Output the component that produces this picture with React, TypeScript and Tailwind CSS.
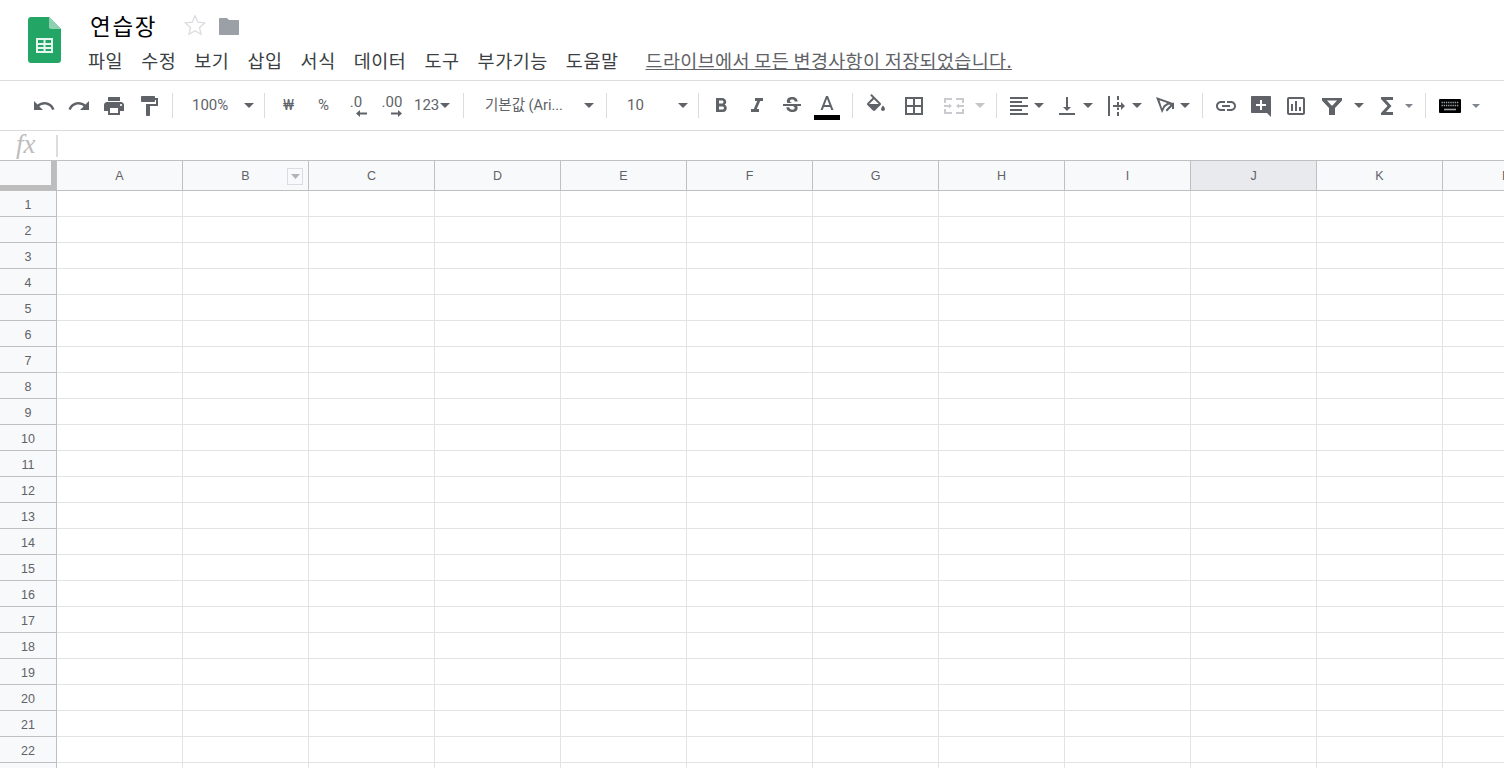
import React from "react";

const cjk = "font-['Noto_Sans_CJK_KR',sans-serif]";

function Ic({ d, className = "fill-[#5f6368]" }: { d: string; className?: string }) {
  return (
    <svg width="24" height="24" viewBox="0 0 24 24" className={`shrink-0 ${className}`}>
      <path d={d} />
    </svg>
  );
}

function Caret({ small, light }: { small?: boolean; light?: boolean }) {
  return (
    <svg width={small ? 8 : 10} height={small ? 4 : 5} viewBox="0 0 10 5" className={light ? "shrink-0 fill-[#c4c6c9]" : small ? "shrink-0 fill-[#80868b]" : "shrink-0 fill-[#5f6368]"}>
      <path d="M0 0h10L5 5z" />
    </svg>
  );
}

function Sep({ className = "" }: { className?: string }) {
  return <div className={`w-px h-[25px] bg-[#dadce0] shrink-0 ${className}`} />;
}

const box = "flex items-center justify-center shrink-0 h-full";
const ib = "flex items-center justify-center shrink-0 h-full pr-[1px]";
const row = "flex items-center shrink-0 h-full";

const P = {
  undo: "M12.5 8c-2.65 0-5.05.99-6.9 2.6L2 7v9h9l-3.62-3.62c1.39-1.16 3.16-1.88 5.12-1.88 3.54 0 6.55 2.31 7.6 5.5l2.37-.78C21.08 11.03 17.15 8 12.5 8z",
  redo: "M18.4 10.6C16.55 8.99 14.15 8 11.5 8c-4.65 0-8.58 3.03-9.96 7.22L3.9 16c1.05-3.19 4.05-5.5 7.6-5.5 1.95 0 3.73.72 5.12 1.88L13 16h9V7l-3.6 3.6z",
  print: "M19 8H5c-1.66 0-3 1.34-3 3v6h4v4h12v-4h4v-6c0-1.66-1.34-3-3-3zm-3 11H8v-5h8v5zm3-7c-.55 0-1-.45-1-1s.45-1 1-1 1 .45 1 1-.45 1-1 1zm-1-9H6v4h12V3z",
  paint: "M18 4V3c0-.55-.45-1-1-1H5c-.55 0-1 .45-1 1v4c0 .55.45 1 1 1h12c.55 0 1-.45 1-1V6h1v4H9v11c0 .55.45 1 1 1h2c.55 0 1-.45 1-1v-9h8V4h-3z",
  bold: "M15.6 10.79c.97-.67 1.65-1.77 1.65-2.79 0-2.26-1.75-4-4-4H7v14h7.04c2.09 0 3.71-1.7 3.71-3.79 0-1.52-.86-2.82-2.15-3.42zM10 6.5h3c.83 0 1.5.67 1.5 1.5s-.67 1.5-1.5 1.5h-3v-3zm3.5 9H10v-3h3.5c.83 0 1.5.67 1.5 1.5s-.67 1.5-1.5 1.5z",
  italic: "M10 4v3h2.21l-3.42 8H6v3h8v-3h-2.21l3.42-8H18V4z",
  strike: "M7.24 8.75c-.26-.48-.39-1.03-.39-1.67 0-.61.13-1.16.4-1.67.26-.5.63-.93 1.11-1.29.48-.35 1.05-.63 1.7-.83.66-.19 1.39-.29 2.18-.29.81 0 1.54.11 2.21.34.66.22 1.23.54 1.69.94.47.4.83.88 1.08 1.43.25.55.38 1.15.38 1.81h-3.01c0-.31-.05-.59-.15-.85-.09-.27-.24-.49-.44-.68-.2-.19-.45-.33-.75-.44-.3-.1-.66-.16-1.06-.16-.39 0-.74.04-1.03.13-.29.09-.53.21-.72.36-.19.16-.34.34-.44.55-.1.21-.15.43-.15.66 0 .48.25.88.74 1.21.38.25.77.48 1.41.7H7.39c-.05-.08-.11-.17-.15-.25zM21 12v-2H3v2h9.62c.18.07.4.14.55.2.37.17.66.34.87.51.21.17.35.36.43.57.07.2.11.43.11.69 0 .23-.05.45-.14.66-.09.2-.23.38-.42.53-.19.15-.42.26-.71.35-.29.08-.63.13-1.01.13-.43 0-.83-.04-1.18-.13s-.66-.23-.91-.42c-.25-.19-.45-.44-.59-.75-.14-.31-.25-.76-.25-1.21H6.4c0 .55.08 1.13.24 1.58.16.45.37.85.65 1.21.28.35.6.66.98.92.37.26.78.48 1.22.65.44.17.9.3 1.38.39.48.08.96.13 1.44.13.8 0 1.53-.09 2.18-.28s1.21-.45 1.67-.79c.46-.34.82-.77 1.07-1.27s.38-1.07.38-1.71c0-.6-.1-1.14-.31-1.61-.05-.11-.11-.23-.17-.33H21z",
  color: "M11 2L5.5 16h2.25l1.12-3h6.25l1.12 3h2.25L13 2h-2zm-1.38 9L12 4.67 14.38 11H9.62z",
  fill: "M16.56 8.94L7.62 0 6.21 1.41l2.38 2.38-5.15 5.15c-.59.59-.59 1.54 0 2.12l5.5 5.5c.29.29.68.44 1.06.44s.77-.15 1.06-.44l5.5-5.5c.59-.58.59-1.53 0-2.12zM5.21 10L10 5.21 14.79 10H5.21zM19 11.5s-2 2.17-2 3.5c0 1.1.9 2 2 2s2-.9 2-2c0-1.33-2-3.5-2-3.5z",
  borders: "M3 3v18h18V3H3zm8 16H5v-6h6v6zm0-8H5V5h6v6zm8 8h-6v-6h6v6zm0-8h-6V5h6v6z",
  merge: "M2 4h8v2H4v3H2V4zm12 0h8v5h-2V6h-6V4zM2 15h2v3h6v2H2v-5zm18 0h2v5h-8v-2h6v-3zM2 11h5V9.5L10 12l-3 2.5V13H2v-2zm20 0v2h-5v1.5L14 12l3-2.5V11h5z",
  align: "M15 15H3v2h12v-2zm0-8H3v2h12V7zM3 13h18v-2H3v2zm0 8h18v-2H3v2zM3 3v2h18V3H3z",
  valign: "M16 13h-3V3h-2v10H8l4 4 4-4zM4 19v2h16v-2H4z",
  wrap: "M3 2h2v20H3V2zm9 0h2v4h-2V2zm0 16h2v4h-2v-4zm0-10h2v3h-2V8zm-4 3h8V8l4 4-4 4v-3H8v-2zm4 2.500h2V16h-2v-2.500z",
  rotate: "M3 3l6 16 3-6 6.500-4.500L3 3zm3.500 3.300l7.700 2.600-3.600 2.600-1.500 3-2.600-8.200zM12.600 16l1.400 1.400 5-5V15h2V8.800h-6.200v2h2.800l-5 5.200z",
  link: "M3.9 12c0-1.71 1.39-3.1 3.1-3.1h4V7H7c-2.76 0-5 2.24-5 5s2.24 5 5 5h4v-1.9H7c-1.71 0-3.1-1.39-3.1-3.1zM8 13h8v-2H8v2zm9-6h-4v1.9h4c1.71 0 3.1 1.39 3.1 3.1s-1.39 3.1-3.1 3.1h-4V17h4c2.76 0 5-2.24 5-5s-2.24-5-5-5z",
  comment: "M3 2h18c.55 0 1 .45 1 1v20l-4-4H3c-.55 0-1-.45-1-1V3c0-.55.45-1 1-1zm10 4h-2v4H7v2h4v4h2v-4h4v-2h-4V6z",
  chart: "M19 3H5c-1.1 0-2 .9-2 2v14c0 1.1.9 2 2 2h14c1.1 0 2-.9 2-2V5c0-1.1-.9-2-2-2zm0 16H5V5h14v14zM7 10h2v7H7v-7zm4-3h2v10h-2V7zm4 6h2v4h-2v-4z",
  filter: "M2 4h20v2.500L15 14v7H9v-7L2 6.500V4zm5 2.500l4.500 5h1l4.500-5H7z",
  sigma: "M18 3H6v2l6.500 7L6 19v2h12v-3h-7l5.500-6L11 6h7V3z",
};

function Toolbar() {
  return (
    <div className="flex items-center h-[49px] border-b border-[#dadce0] box-content pl-[27px] text-[15px] text-[#5f6368] font-['Roboto',sans-serif] overflow-hidden">
      <div className={`${ib} w-[35px]`}><Ic d={P.undo} /></div>
      <div className={`${ib} w-[35px]`}><Ic d={P.redo} /></div>
      <div className={`${ib} w-[35px]`}><Ic d={P.print} /></div>
      <div className={`${ib} w-[35px]`}><Ic d={P.paint} /></div>
      <Sep className="ml-[5px]" />
      <div className={`${row} w-[91px] justify-between pl-[19px] pr-[10px]`}><span>100%</span><Caret /></div>
      <Sep />
      <div className={`${box} w-[35px] ml-[6px] text-[15px]`}>₩</div>
      <div className={`${box} w-[35px] text-[15px]`}>%</div>
      <div className={`${box} w-[34px] flex-col`}>
        <span className="leading-[15px] mt-[1px] -ml-[4px]">.0</span>
        <svg width="11" height="7" viewBox="0 0 11 7" className="fill-[#5f6368] ml-[6px]"><path d="M4 0v2.500h7v2H4V7L0 3.500z" /></svg>
      </div>
      <div className={`${box} w-[34px] flex-col`}>
        <span className="leading-[15px] mt-[1px]">.00</span>
        <svg width="11" height="7" viewBox="0 0 11 7" className="fill-[#5f6368] ml-[8px]"><path d="M7 0v2.500H0v2h7V7l4-3.500z" /></svg>
      </div>
      <div className={`${row} w-[46px] pl-[5px] gap-[1px]`}><span>123</span><Caret /></div>
      <Sep className="ml-[8px]" />
      <div className={`${row} w-[142px] justify-between pl-[21px] pr-[12px] text-[14.500px]`}>
        <span className="text-[#5f6368] whitespace-nowrap font-['Roboto','Noto_Sans_CJK_KR',sans-serif]">기본값 (Ari...</span><Caret />
      </div>
      <Sep />
      <div className={`${row} w-[91px] justify-between pl-[20px] pr-[10px]`}><span>10</span><Caret /></div>
      <Sep />
      <div className={`${ib} w-[35px] ml-[5px]`}><Ic d={P.bold} /></div>
      <div className={`${box} w-[36px]`}><Ic d={P.italic} /></div>
      <div className={`${ib} w-[35px]`}><Ic d={P.strike} /></div>
      <div className={`${ib} w-[35px] flex-col`}>
        <Ic d={P.color} className="fill-[#5f6368] mt-[3px]" />
        <div className="w-[26px] h-[5px] bg-black -mt-[3px]" />
      </div>
      <Sep className="ml-[7px]" />
      <div className={`${ib} w-[47px]`}><Ic d={P.fill} /></div>
      <div className={`${ib} w-[29px]`}><Ic d={P.borders} /></div>
      <div className={`${row} w-[46px] pl-[13px]`}><Ic d={P.merge} className="fill-[#c9cbce]" /></div>
      <div className={`${row} w-[15px]`}><Caret light /></div>
      <Sep className="ml-[6px]" />
      <div className={`${row} w-[58px] pl-[10px] gap-[3px]`}><Ic d={P.align} /><Caret /></div>
      <div className={`${row} w-[50px] gap-[4px]`}><Ic d={P.valign} /><Caret /></div>
      <div className={`${row} w-[48px] gap-[3px]`}><Ic d={P.wrap} /><Caret /></div>
      <div className={`${row} w-[49px] gap-[3px]`}><Ic d={P.rotate} /><Caret /></div>
      <Sep />
      <div className={`${ib} w-[35px] ml-[6px]`}><Ic d={P.link} /></div>
      <div className={`${ib} w-[35px]`}><Ic d={P.comment} /></div>
      <div className={`${ib} w-[35px]`}><Ic d={P.chart} /></div>
      <div className={`${row} w-[61px] pl-[6px] gap-[10px]`}><Ic d={P.filter} /><Caret /></div>
      <div className={`${row} w-[50px] gap-[6px]`}><Ic d={P.sigma} /><Caret small /></div>
      <Sep />
      <div className={`${row} w-[60px] pl-[12px] gap-[10px]`}>
        <svg width="24" height="16" viewBox="0 0 24 16" className="shrink-0"><rect x="1" y="1" width="22" height="14" rx="1" fill="#000" /><path d="M3.500 4.500h17M3.500 7.500h17" stroke="#9aa0a6" strokeWidth="1.600" strokeDasharray="1.400 .8" /><path d="M6 11.500h12" stroke="#9aa0a6" strokeWidth="1.600" /></svg>
        <Caret small />
      </div>
    </div>
  );
}

const cols = ["A", "B", "C", "D", "E", "F", "G", "H", "I", "J", "K", "L"];
const rows = Array.from({ length: 23 }, (_, i) => i + 1);
const menus = ["파일", "수정", "보기", "삽입", "서식", "데이터", "도구", "부가기능", "도움말"];

function Sheet() {
  return (
    <div className="font-['Liberation_Sans',sans-serif] text-[12.500px] text-[#5f6368]">
      <div className="flex h-[30px] border-b border-[#c0c0c0]">
        <div className="w-[57px] shrink-0 border-r border-[#c0c0c0] bg-[#f8f9fa]">
          <div className="w-[56px] h-[29px] border-r-[5px] border-b-[5px] border-[#bdbdbd]" />
        </div>
        {cols.map((c) => (
          <div key={c} className={`w-[126px] shrink-0 border-r border-[#c0c0c0] flex items-center justify-center relative pt-[1px] ${c === "J" ? "bg-[#e8eaed]" : "bg-[#f8f9fa]"}`}>
            {c}
            {c === "B" && (
              <div className="absolute left-[104px] top-[7px] w-[16px] h-[17px] border border-[#dadce0] flex items-center justify-center">
                <svg width="9" height="5" viewBox="0 0 9 5" className="fill-[#b0b3b7]"><path d="M0 0h9L4.500 5z" /></svg>
              </div>
            )}
          </div>
        ))}
      </div>
      {rows.map((r) => (
        <div key={r} className="flex h-[26px] border-b border-[#e2e3e3]">
          <div className="w-[57px] shrink-0 border-r border-[#c0c0c0] border-b border-b-[#c0c0c0] -mb-px bg-[#f8f9fa] flex items-center justify-center pt-[4px]">{r}</div>
          {cols.map((c) => (
            <div key={c} className="w-[126px] shrink-0 border-r border-[#e2e3e3]" />
          ))}
        </div>
      ))}
    </div>
  );
}

export default function App() {
  return (
    <div className="h-[768px] w-[1504px] overflow-hidden bg-white">
      <header className="flex h-[81px] border-b border-[#dadce0]">
        <div className="w-[88px] shrink-0 pl-[28px] pt-[17px]">
          <svg width="33" height="46" viewBox="0 0 33 46">
            <path d="M3 0h18l12 12v31c0 1.700-1.300 3-3 3H3c-1.700 0-3-1.300-3-3V3C0 1.300 1.300 0 3 0z" fill="#23a566" />
            <path d="M21 0l12 12H23c-1.100 0-2-.9-2-2V0z" fill="#8ed1b1" />
            <path fillRule="evenodd" d="M8 21h17v15H8V21zm2 2v3h5.500v-3H10zm7.500 0v3H23v-3h-5.500zM10 28v2h5.500v-2H10zm7.500 0v2H23v-2h-5.500zM10 32v2h5.500v-2H10zm7.500 0v2H23v-2h-5.500z" fill="#e6f5ee" />
          </svg>
        </div>
        <div className="flex-1 min-w-0">
          <div className="flex items-center h-[44px] pl-[2px] pt-[6px]">
            <span className={`text-[22.500px] leading-none text-black ${cjk} tracking-[1.700px]`}>연습장</span>
            <svg width="24" height="24" viewBox="0 0 24 24" className="ml-[26px] fill-none stroke-[#dadce0] stroke-[1.300]">
              <path d="M12 2.800l2.800 6.400 6.900.7-5.200 4.600 1.500 6.800-6-3.500-6 3.500 1.500-6.800-5.200-4.600 6.900-.7z" />
            </svg>
            <svg width="20" height="17" viewBox="0 0 20 17" className="ml-[12px] mt-[2px] fill-[#9aa0a6]"><path d="M8 0H1C.4 0 0 .4 0 1v15c0 .6.4 1 1 1h18c.6 0 1-.4 1-1V3c0-.6-.4-1-1-1H10L8 0z" /></svg>
          </div>
          <div className={`flex items-center h-[34px] text-[18.500px] text-[#3c4043] ${cjk}`}>
            {menus.map((m) => (
              <span key={m} className="mr-[18px] tracking-[0.550px] whitespace-nowrap">{m}</span>
            ))}
            <span className="ml-[9px] underline text-[#5f6368] tracking-[0.350px] whitespace-nowrap">드라이브에서 모든 변경사항이 저장되었습니다.</span>
          </div>
        </div>
      </header>
      <Toolbar />
      <div className="flex items-center h-[30px] border-b border-[#c0c0c0]">
        <span className="w-[56px] pl-[16px] pb-[3px] text-[27px] leading-none italic text-[#bdbdbd] font-['Liberation_Serif',serif]">fx</span>
        <div className="w-[2px] h-[22px] bg-[#dadce0]" />
      </div>
      <Sheet />
    </div>
  );
}
